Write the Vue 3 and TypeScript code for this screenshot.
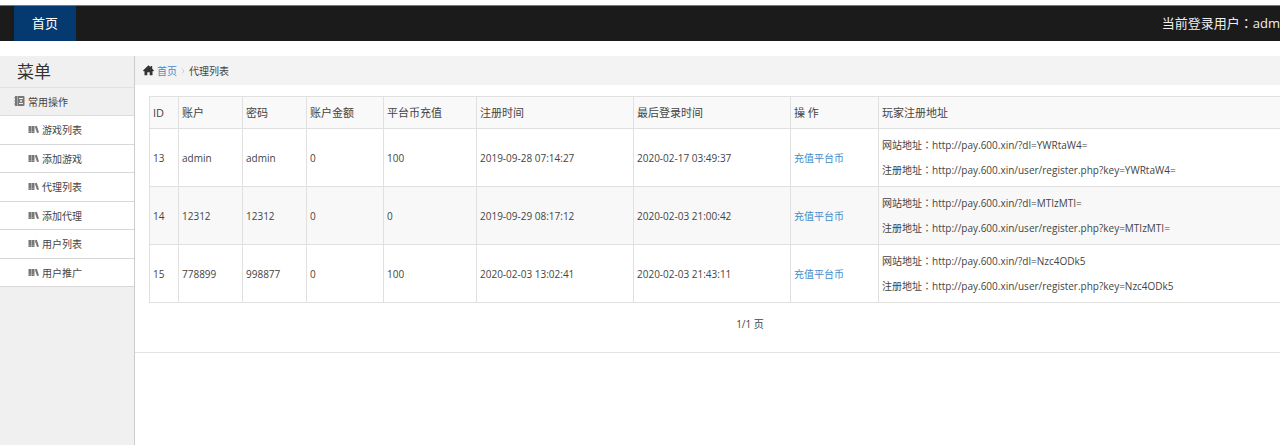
<script setup lang="ts">
interface Agent {
  id: number
  account: string
  password: string
  balance: number
  coins: number
  registered: string
  lastLogin: string
  key: string
}

const menu: string[] = ['游戏列表', '添加游戏', '代理列表', '添加代理', '用户列表', '用户推广']
const headings: string[] = ['ID', '账户', '密码', '账户金额', '平台币充值', '注册时间', '最后登录时间', '操 作', '玩家注册地址']
const agents: Agent[] = [
  { id: 13, account: 'admin', password: 'admin', balance: 0, coins: 100, registered: '2019-09-28 07:14:27', lastLogin: '2020-02-17 03:49:37', key: 'YWRtaW4=' },
  { id: 14, account: '12312', password: '12312', balance: 0, coins: 0, registered: '2019-09-29 08:17:12', lastLogin: '2020-02-03 21:00:42', key: 'MTIzMTI=' },
  { id: 15, account: '778899', password: '998877', balance: 0, coins: 100, registered: '2020-02-03 13:02:41', lastLogin: '2020-02-03 21:43:11', key: 'Nzc4ODk5' },
]
</script>

<template>
  <div class="viewport">
    <div class="page">
      <header class="topbar">
        <nav><a class="home-tab" href="#">首页</a></nav>
        <span class="user">当前登录用户<span class="colon">：</span>adm</span>
      </header>
      <div class="body">
        <aside class="sidebar">
          <h1 class="title">菜单</h1>
          <h2 class="group">
            <svg class="icon" viewBox="0 0 11 11" aria-hidden="true">
              <path fill="#777" d="M1 0h8.500a1 1 0 0 1 1 1v8a1 1 0 0 1-1 1H1V8.500H.3v-1H1V5.500H.3v-1H1V2.500H.3v-1H1z" />
              <path fill="#bbb" d="M3 0h.7v10H3z" />
              <path fill="#eee" d="M5 2h4v1H5zM6.200 4h1.600v2H6.200zM5 7h4v1H5z" />
            </svg>
            常用操作
          </h2>
          <ul class="menu">
            <li v-for="item in menu" :key="item">
              <a href="#">
                <svg class="icon" viewBox="0 0 11 11" aria-hidden="true">
                  <path fill="#777" d="M.5 2h2.800v7H.5zM3.700 2h2.800v7H3.700zM6.800 2.400l2-.6L11 8.500l-2 .6z" />
                  <path stroke="#bbb" stroke-width=".5" d="M1 7.500h1.800M4.200 7.500H6" />
                </svg>
                {{ item }}
              </a>
            </li>
          </ul>
        </aside>
        <main class="content">
          <nav class="crumbs">
            <svg class="icon" viewBox="0 0 11 11" aria-hidden="true">
              <path fill="#333" d="M5.500.3 7.600 2.200V1h1.600v2.700L11 5.400l-.6.900H9.500v3.900H6.700V7.200H4.300v3H1.500V6.300H.6L0 5.400z" />
            </svg>
            <a href="#">首页</a>
            <svg class="chevron" viewBox="0 0 4 6" aria-hidden="true"><path d="M1 .5 3 3 1 5.500" fill="none" stroke="#ccc" /></svg>
            <span>代理列表</span>
          </nav>
          <section class="panel">
            <table>
              <colgroup><col v-for="(h, i) in headings" :key="h" :class="'c' + i" /></colgroup>
              <thead>
                <tr><th v-for="h in headings" :key="h" scope="col">{{ h }}</th></tr>
              </thead>
              <tbody>
                <tr v-for="a in agents" :key="a.id">
                  <td>{{ a.id }}</td>
                  <td>{{ a.account }}</td>
                  <td>{{ a.password }}</td>
                  <td>{{ a.balance }}</td>
                  <td>{{ a.coins }}</td>
                  <td>{{ a.registered }}</td>
                  <td>{{ a.lastLogin }}</td>
                  <td><a href="#">充值平台币</a></td>
                  <td>
                    <p>网站地址<span class="colon">：</span>http://pay.600.xin/?dl={{ a.key }}</p>
                    <p>注册地址<span class="colon">：</span>http://pay.600.xin/user/register.php?key={{ a.key }}</p>
                  </td>
                </tr>
              </tbody>
            </table>
            <p class="pager">1/1 页</p>
          </section>
        </main>
      </div>
    </div>
  </div>
</template>

<style>
body {
  margin: 0;
  background: #fff;
}
</style>

<style scoped>
.viewport {
  overflow: hidden;
  font-family: "Open Sans", "Noto Sans CJK SC", sans-serif;
  font-size: 10px;
  color: #444;
}
.page {
  display: flex;
  flex-direction: column;
  box-sizing: border-box;
  min-width: 1366px;
  min-height: 100vh;
  padding-top: 5px;
}
.topbar {
  display: flex;
  justify-content: space-between;
  height: 35px;
  padding: 0 86px 0 14px;
  border-top: 1px solid #777;
  background: #1b1b1b;
  font-size: 13px;
  line-height: 35px;
}
.home-tab {
  display: block;
  padding: 0 18px;
  background: #043a70;
  color: #fff;
}
.user {
  color: #eee;
}
.colon {
  font-family: "Noto Sans CJK TC", sans-serif;
  line-height: 1;
}
.body {
  display: flex;
  flex: 1;
  margin-top: 15px;
}
a {
  color: #428bca;
  text-decoration: none;
}
p {
  margin: 0;
}
.icon {
  flex: none;
  width: 11px;
  height: 11px;
}
.sidebar {
  flex: none;
  width: 134px;
  border-right: 1px solid #ccc;
  background: #f0f0f0;
}
.title {
  margin: 0;
  padding-left: 17px;
  font-size: 17px;
  font-weight: 400;
  line-height: 31px;
  color: #333;
}
.group {
  display: flex;
  align-items: center;
  gap: 3px;
  height: 27px;
  margin: 0;
  padding-left: 14px;
  border-top: 1px solid #e2e2e2;
  border-bottom: 1px solid #ddd;
  font-size: 10px;
  font-weight: 400;
}
.menu {
  display: grid;
  grid-auto-rows: 1fr;
  height: 171px;
  margin: 0;
  padding: 0;
  list-style: none;
  background: #fff;
}
.menu li {
  display: flex;
  border-bottom: 1px solid #d8d8d8;
}
.menu a {
  display: flex;
  flex: 1;
  align-items: center;
  gap: 3px;
  padding-left: 28px;
  color: #444;
}
.content {
  flex: 1;
  min-width: 0;
}
.crumbs {
  display: flex;
  align-items: center;
  gap: 3px;
  height: 29px;
  padding-left: 8px;
  background: #f3f3f3;
}
.chevron {
  width: 4px;
  height: 6px;
  margin: 0 1px;
}
.panel {
  padding: 11px 15px 15px 14px;
  border-bottom: 1px solid #e2e2e2;
}
table {
  width: 100%;
  table-layout: fixed;
  border-collapse: collapse;
}
.c0 { width: 29px; }
.c1, .c2 { width: 64px; }
.c3 { width: 77px; }
.c4 { width: 93px; }
.c5, .c6 { width: 157px; }
.c7 { width: 88px; }
th,
td {
  padding: 3px;
  border: 1px solid #e0e0e0;
  text-align: left;
  font-weight: 400;
  line-height: 25px;
  white-space: nowrap;
}
td {
  padding-top: 4px;
}
th {
  background: #f9f9f9;
  font-size: 11px;
}
tbody tr:nth-child(even) {
  background: #f8f8f8;
}
.pager {
  padding-top: 9px;
  text-align: center;
  line-height: 25px;
}
</style>
